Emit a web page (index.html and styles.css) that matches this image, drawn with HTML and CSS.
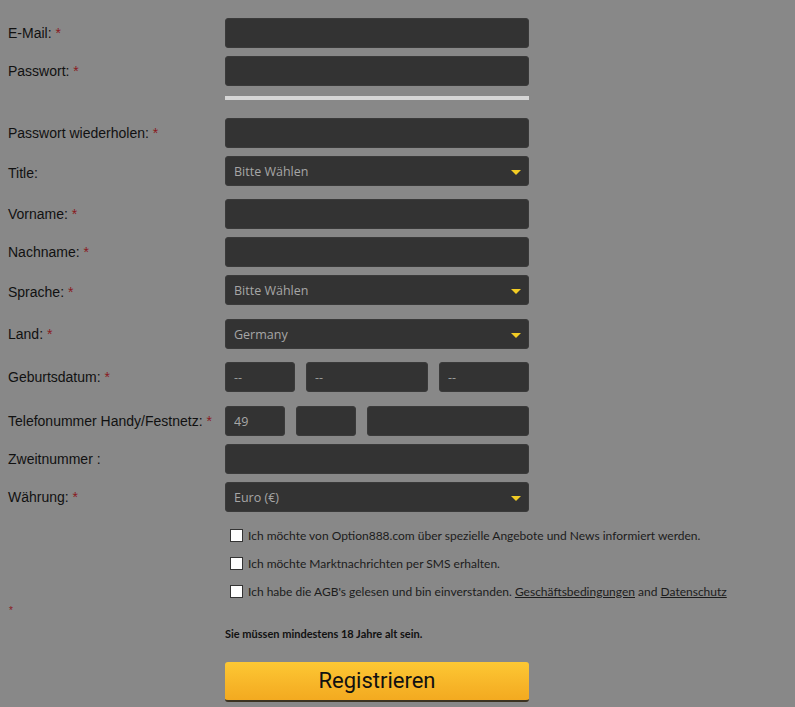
FILE: index.html
```html
<!DOCTYPE html>
<html lang="de">
<head>
<meta charset="utf-8">
<title>Registrieren</title>
<link rel="stylesheet" href="styles.css">
</head>
<body>
<form class="form">
  <div class="row">
    <label class="label">E-Mail: <span class="req">*</span></label>
    <input class="field" type="text">
  </div>
  <div class="row row-pw">
    <label class="label">Passwort: <span class="req">*</span></label>
    <input class="field" type="password">
  </div>
  <div class="strength"></div>
  <div class="row">
    <label class="label">Passwort wiederholen: <span class="req">*</span></label>
    <input class="field" type="password">
  </div>
  <div class="row row-wide">
    <label class="label label-low">Title:</label>
    <div class="select"><span class="select-text">Bitte Wählen</span></div>
  </div>
  <div class="row">
    <label class="label">Vorname: <span class="req">*</span></label>
    <input class="field" type="text">
  </div>
  <div class="row">
    <label class="label">Nachname: <span class="req">*</span></label>
    <input class="field" type="text">
  </div>
  <div class="row row-wider">
    <label class="label label-low">Sprache: <span class="req">*</span></label>
    <div class="select"><span class="select-text">Bitte Wählen</span></div>
  </div>
  <div class="row row-wide">
    <label class="label">Land: <span class="req">*</span></label>
    <div class="select"><span class="select-text">Germany</span></div>
  </div>
  <div class="row row-wider">
    <label class="label">Geburtsdatum: <span class="req">*</span></label>
    <div class="multi">
      <input class="field f-day" type="text" placeholder="--">
      <input class="field f-month" type="text" placeholder="--">
      <input class="field f-year" type="text" placeholder="--">
    </div>
  </div>
  <div class="row">
    <label class="label">Telefonummer Handy/Festnetz: <span class="req">*</span></label>
    <div class="multi">
      <input class="field f-cc" type="text" value="49">
      <input class="field f-area" type="text">
      <input class="field f-num" type="text">
    </div>
  </div>
  <div class="row">
    <label class="label">Zweitnummer :</label>
    <input class="field" type="text">
  </div>
  <div class="row row-last">
    <label class="label">Währung: <span class="req">*</span></label>
    <div class="select"><span class="select-text">Euro (€)</span></div>
  </div>

  <div class="checks">
    <label class="check"><input type="checkbox" class="cb"><span>Ich möchte von Option888.com über spezielle Angebote und News informiert werden.</span></label>
    <label class="check"><input type="checkbox" class="cb"><span>Ich möchte Marktnachrichten per SMS erhalten.</span></label>
    <label class="check"><input type="checkbox" class="cb"><span>Ich habe die AGB's gelesen und bin einverstanden. <a class="link" href="#">Geschäftsbedingungen</a> and <a class="link" href="#">Datenschutz</a></span></label>
  </div>
  <div class="req-line"><span class="req req-small">*</span></div>
  <p class="note">Sie müssen mindestens 18 Jahre alt sein.</p>
  <button class="submit" type="button">Registrieren</button>
</form>
</body>
</html>
```

FILE: styles.css
```css
html, body {
  margin: 0;
  padding: 0;
  background: #888888;
}
body {
  font-family: "Liberation Sans", Arial, sans-serif;
  color: #0f0f0f;
}
.form {
  padding: 18px 0 0 8px;
  width: 740px;
}
.row {
  display: flex;
  align-items: center;
  margin-bottom: 8px;
}
.row-pw {
  margin-bottom: 10px;
}
.row-wide {
  margin-bottom: 13px;
}
.row-wider {
  margin-bottom: 14px;
}
.row-last {
  margin-bottom: 9px;
}
.label {
  width: 217px;
  flex: none;
  font-size: 14px;
  line-height: 16px;
  color: #111;
}
.label-low {
  position: relative;
  top: 2px;
}
.req {
  color: #8a1a1e;
}
.field {
  box-sizing: border-box;
  width: 304px;
  height: 30px;
  margin: 0;
  padding: 0 8px;
  border: 1px solid #3a3a3a;
  border-radius: 3px;
  background: #333333;
  color: #b4b4b4;
  font-family: "Open Sans", "DejaVu Sans", sans-serif;
  font-size: 12.5px;
  outline: none;
}
.field::placeholder {
  color: #9a9a9a;
}
.strength {
  margin-left: 217px;
  width: 304px;
  height: 4px;
  background: #d6d6d6;
  margin-bottom: 18px;
}
.select {
  box-sizing: border-box;
  position: relative;
  width: 304px;
  height: 30px;
  padding: 0 8px;
  display: flex;
  align-items: center;
  border: 1px solid #3a3a3a;
  border-radius: 3px;
  background: #333333;
}
.select-text {
  font-family: "Open Sans", "DejaVu Sans", sans-serif;
  font-size: 12.5px;
  color: #a6a6a6;
}
.select::after {
  content: "";
  position: absolute;
  right: 7px;
  top: 13px;
  border-left: 5px solid transparent;
  border-right: 5px solid transparent;
  border-top: 5px solid #f2cc24;
}
.multi {
  display: flex;
  gap: 11px;
}
.f-day { width: 70px; }
.f-month { width: 122px; }
.f-year { width: 90px; }
.f-cc { width: 60px; color: #a8a8a8; }
.f-area { width: 60px; }
.f-num { width: 162px; }

.checks {
  margin-left: 222px;
}
.check {
  display: flex;
  align-items: center;
  height: 28px;
  font-family: Lato, "Open Sans", sans-serif;
  font-size: 12px;
  color: #1c1c1c;
}
.cb {
  appearance: none;
  -webkit-appearance: none;
  box-sizing: border-box;
  width: 13px;
  height: 13px;
  margin: 0 5px 0 0;
  border: 1px solid #333;
  background: #ffffff;
  flex: none;
}
.link {
  color: #1c1c1c;
  text-decoration: underline;
}
.req-line {
  height: 10px;
  line-height: 10px;
  margin-top: -1px;
}
.req-small {
  font-size: 10px;
  padding-left: 1px;
}
.note {
  margin: 13px 0 0 217px;
  font-family: Lato, "Open Sans", sans-serif;
  font-weight: bold;
  font-size: 11px;
  line-height: 14px;
  color: #111;
}
.submit {
  display: block;
  box-sizing: border-box;
  margin: 21px 0 0 217px;
  width: 304px;
  height: 40px;
  padding: 0 0 2px;
  border: none;
  border-radius: 3px;
  border-bottom: 2px solid #3b3220;
  background: linear-gradient(to bottom, #fdc834 0%, #f7b528 60%, #f3aa20 100%);
  font-family: Roboto, "Liberation Sans", sans-serif;
  font-size: 22px;
  color: #111;
  cursor: pointer;
}
```
